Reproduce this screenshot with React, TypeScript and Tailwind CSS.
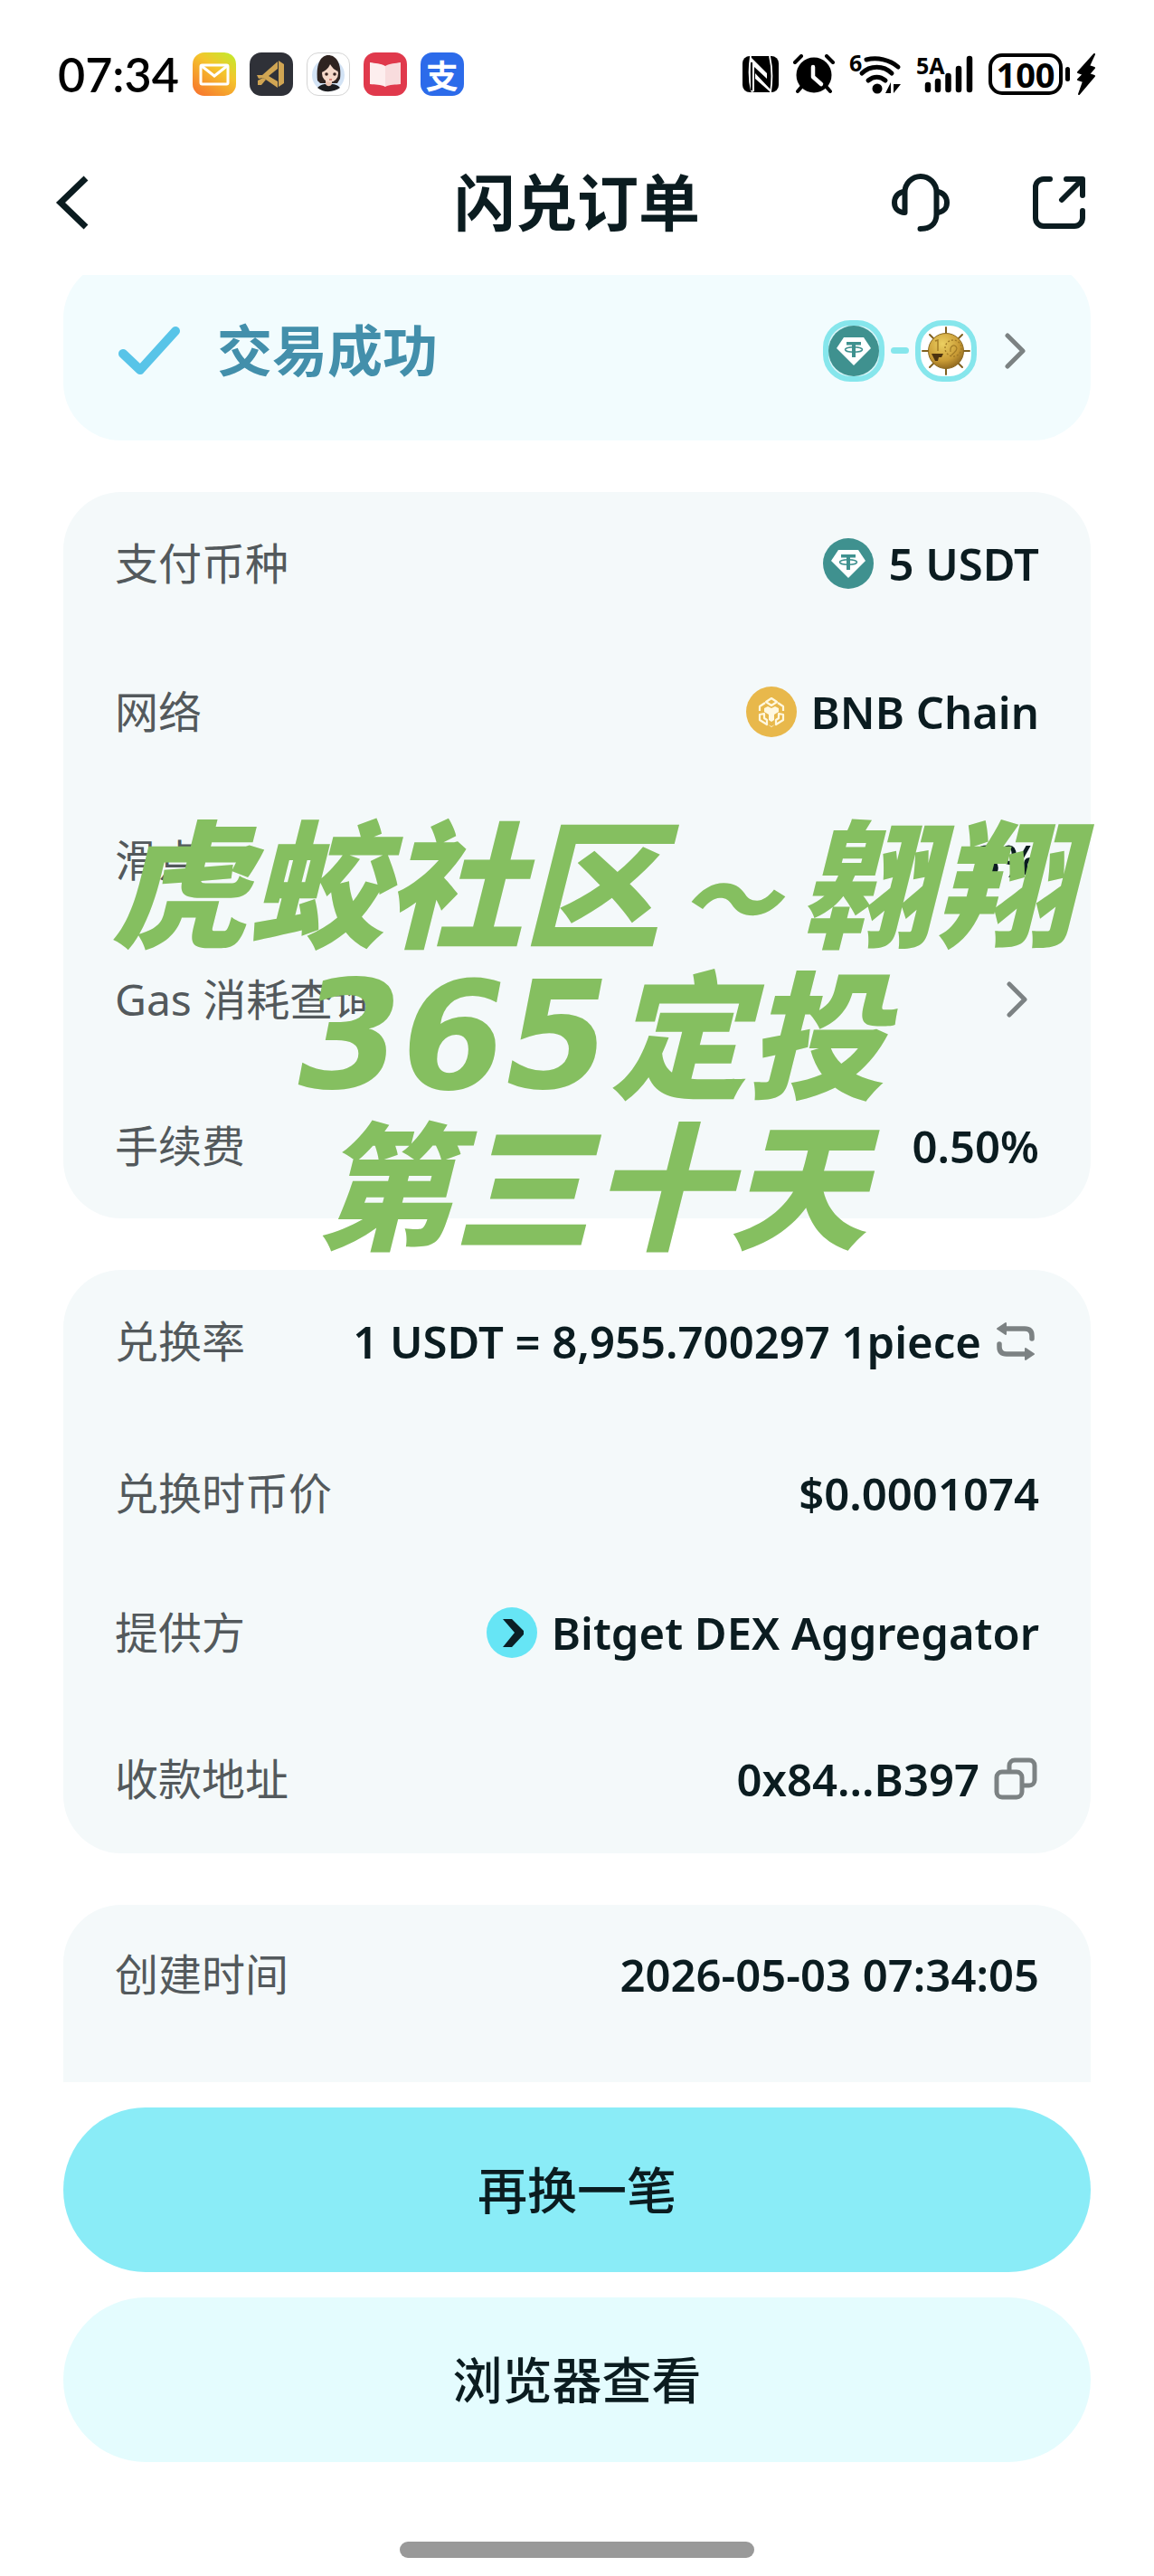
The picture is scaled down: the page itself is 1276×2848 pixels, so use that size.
import React from "react";

const SANS = "font-['Noto_Sans','Noto_Sans_CJK_SC',sans-serif]";

function MailApp() {
  return (
    <svg viewBox="0 0 48 48" className="size-12" aria-hidden="true">
      <defs>
        <linearGradient id="mail" x1="0.9" y1="0" x2="0.2" y2="1">
          <stop offset="0" stopColor="#c3ea2c" />
          <stop offset="0.4" stopColor="#f4c52c" />
          <stop offset="1" stopColor="#f77a2e" />
        </linearGradient>
      </defs>
      <rect width="48" height="48" rx="13" fill="url(#mail)" />
      <rect x="9" y="14" width="30" height="21" rx="1.5" fill="none" stroke="#fff" strokeWidth="3" />
      <path d="M10 15l14 11 14-11" fill="none" stroke="#fff" strokeWidth="3" />
    </svg>
  );
}

function CodeApp() {
  return (
    <svg viewBox="0 0 48 48" className="size-12" aria-hidden="true">
      <rect width="48" height="48" rx="13" fill="#2f3138" />
      <path d="M31 10v8l-10 8 10 6v7L15 28l-5 1-2-4 6 0z" fill="#d0a553" />
      <path d="M32 9l6 4v21l-6 4z" fill="#d0a553" />
      <path d="M9 31l6-3 3 2-5 6h-4z" fill="#d0a553" />
    </svg>
  );
}

function AvatarApp() {
  return (
    <svg viewBox="0 0 48 48" className="size-12" aria-hidden="true">
      <rect x="0.5" y="0.5" width="47" height="47" rx="12.5" fill="#fff" stroke="#d4d4d4" />
      <circle cx="24" cy="25" r="18" fill="#d3e3f5" />
      <path d="M12 31C10 12 16 3 24 3s15 8 13 26l-3 5H15z" fill="#2f2320" />
      <path d="M21 29h7v9h-7z" fill="#edc4b2" />
      <ellipse cx="26" cy="23" rx="9" ry="10" fill="#f6d8c9" />
      <path d="M16 22c2-10 8-12 11-13 3 2 7 5 8 12-5-2-7-5-9-8-2 5-6 8-10 9z" fill="#2f2320" />
      <circle cx="22" cy="24" r="1.8" fill="#3a2420" />
      <circle cx="31" cy="24" r="1.8" fill="#3a2420" />
      <path d="M25 30h3" stroke="#c76158" strokeWidth="1.4" />
      <path d="M12 39c4-4 8-4 9-4 2 3 5 3 7 0 4 0 6 1 9 4-7 5-18 6-25 0z" fill="#1d1d20" />
    </svg>
  );
}

function BookApp() {
  return (
    <svg viewBox="0 0 48 48" className="size-12" aria-hidden="true">
      <rect width="48" height="48" rx="13" fill="#e0394c" />
      <path d="M7 11c6 1 12 1 17 4v23c-5-3-11-2-17-3z" fill="#fdeeee" />
      <path d="M41 11c-6 1-12 1-17 4v23c5-3 11-2 17-3z" fill="#f8dcdd" />
    </svg>
  );
}

function PayApp() {
  return (
    <span className="flex size-12 items-center justify-center rounded-[13px] bg-[#2c6bea] font-['Noto_Sans_CJK_SC',sans-serif] text-[36px] leading-[48px] font-bold text-white">
      支
    </span>
  );
}

function NfcIcon() {
  return (
    <svg viewBox="0 0 40 40" className="size-10" aria-hidden="true">
      <rect width="40" height="40" rx="8" fill="#000" />
      <path d="M9 0c-2 13-2 27 1 39M31 40c2-13 2-27-1-40" fill="none" stroke="#fff" strokeWidth="1.8" />
      <path d="M9 1l18 18v6L13 12v27l-3 1C8 27 8 14 9 1zM14 19l17 18v3L14 25z" fill="#fff" />
      <path d="M10 7v31" stroke="#000" strokeWidth="2" />
    </svg>
  );
}

function AlarmIcon() {
  return (
    <svg viewBox="0 0 46 44" className="h-11 w-[46px]" aria-hidden="true">
      <circle cx="23" cy="23" r="19.5" fill="#000" />
      <path d="M2 9l7-7M44 9l-7-7M11 34l-6 7M35 34l6 7" stroke="#000" strokeWidth="4" strokeLinecap="round" />
      <path d="M22 14v11l9 8" fill="none" stroke="#fff" strokeWidth="4.5" strokeLinecap="round" strokeLinejoin="round" />
    </svg>
  );
}

function WifiIcon() {
  return (
    <svg viewBox="0 0 58 60" className="h-15 w-[58px]" aria-hidden="true">
      <text x="0" y="27" fontFamily="Noto Sans" fontWeight="700" fontSize="25">
        6
      </text>
      <g fill="none" stroke="#000" strokeWidth="5" strokeLinecap="round">
        <path d="M19 14c12-3 26 0 35 8" />
        <path d="M14 29c9-9 24-9 33 0" />
        <path d="M21 37c6-5 13-5 19 0" />
      </g>
      <circle cx="31" cy="46" r="5.5" />
      <path d="M46 39v12h-6zM49 51V41h8z" />
    </svg>
  );
}

function SignalIcon() {
  return (
    <svg viewBox="0 0 64 60" className="h-15 w-16" aria-hidden="true">
      <text x="0" y="30" fontFamily="Noto Sans" fontWeight="700" fontSize="25">
        5A
      </text>
      <g stroke="#000" strokeWidth="6.5" strokeLinecap="round">
        <path d="M13 42v5M24 38v9M35.5 32v15M47 24v23M59 13v34" />
      </g>
    </svg>
  );
}

function BatteryIcon() {
  return (
    <span className="flex items-center gap-[3px]">
      <span className="flex h-[46px] w-[82px] items-center justify-center rounded-[15px] border-4 border-black text-[38px] leading-[38px] font-bold">
        100
      </span>
      <span className="h-4 w-[5px] rounded-full bg-black" />
      <svg viewBox="0 0 22 48" className="ml-1 h-12 w-[22px]" aria-hidden="true">
        <path d="M20 2L2 22l6 2-6 6 6 2-5 14 17-20-6-2 6-7-6-2z" stroke="#000" strokeWidth="2" strokeLinejoin="round" />
      </svg>
    </span>
  );
}

function Tether({ className }: { className: string }) {
  return (
    <svg viewBox="0 0 56 56" className={className} aria-hidden="true">
      <circle cx="28" cy="28" r="28" fill="#3f918f" />
      <path d="M17 13h22l8 12-19 19L9 25z" fill="#fff" />
      <path d="M20 18h16v3.500H20zM26 20h4v15h-4z" fill="#3f918f" />
      <ellipse cx="28" cy="26.500" rx="9.500" ry="2.800" fill="none" stroke="#3f918f" strokeWidth="1.500" />
    </svg>
  );
}

function BnbCoin() {
  return (
    <svg viewBox="0 0 56 56" className="size-14" aria-hidden="true">
      <circle cx="28" cy="28" r="28" fill="#e8b84b" />
      <g fill="none" stroke="#fff8e0" strokeWidth="2.200" strokeLinejoin="round">
        <path d="M28 13l6 4-6 4-6-4zM21 18l-6 4v5M35 18l6 4v5" />
        <path d="M15 31v6l8 5v-5l-3-2v-5zM41 31v6l-8 5v-5l3-2v-5z" />
      </g>
      <path d="M20 24l4-2 4 2 4-2 4 2v4l-5 3v6l-3 2-3-2v-6l-5-3zM24 42l4 2 4-2-4 3z" fill="#fff8e0" />
    </svg>
  );
}

function GoldCoin() {
  return (
    <svg viewBox="0 0 56 56" className="size-14" aria-hidden="true">
      <defs>
        <radialGradient id="gold" cx="0.4" cy="0.3" r="0.8">
          <stop offset="0" stopColor="#ecd062" />
          <stop offset="0.6" stopColor="#c99b35" />
          <stop offset="1" stopColor="#7c5718" />
        </radialGradient>
      </defs>
      <path
        d="M28 2v52M2 28h52M10 10l36 36M46 10L10 46"
        stroke="#80611f"
        strokeWidth="2"
        strokeLinecap="round"
      />
      <circle cx="28" cy="28" r="19.5" fill="url(#gold)" stroke="#8c6a22" />
      <path d="M16 17l3-1v12" fill="none" stroke="#a27b26" strokeWidth="1.4" />
      <circle cx="36" cy="25" r="9" fill="none" stroke="#a27b26" strokeWidth="1.4" strokeDasharray="2 2" />
      <path d="M33 29c-1-8 6-9 7-4 0 4-4 5-6 8" fill="none" stroke="#a27b26" strokeWidth="1.2" />
      <path d="M12 31h13l-2 4h-3l-1 4h-3z" fill="#4d3310" />
    </svg>
  );
}

function BitgetCoin() {
  return (
    <svg viewBox="0 0 56 56" className="size-14" aria-hidden="true">
      <circle cx="28" cy="28" r="28" fill="#66e5f5" />
      <path d="M18 13h10l13 13v4L28 44H18l13-16z" fill="#0b1f26" />
    </svg>
  );
}

function Chevron() {
  return (
    <svg viewBox="0 0 24 40" className="h-10 w-6 text-[#7c8283]" fill="none" stroke="currentColor" aria-hidden="true">
      <path d="M3 3l17 17L3 37" strokeWidth="5" strokeLinecap="round" strokeLinejoin="round" />
    </svg>
  );
}

function SwapIcon() {
  return (
    <svg viewBox="0 0 48 44" className="h-11 w-12 text-[#7c8283]" fill="none" stroke="currentColor" aria-hidden="true">
      <path d="M8 8h24q8 0 8 8v3M4 25v3q0 8 8 8h24" strokeWidth="5.5" strokeLinecap="round" />
      <path d="M11 2L2 8l9 6zM33 30l9 6-9 6z" fill="currentColor" strokeWidth="2" strokeLinejoin="round" />
    </svg>
  );
}

function CopyIcon() {
  return (
    <svg viewBox="0 0 50 48" className="h-12 w-[50px] text-[#7c8283]" fill="none" stroke="currentColor" aria-hidden="true">
      <rect x="3" y="16" width="28" height="28" rx="6" strokeWidth="5" />
      <path d="M17 15V9a6 6 0 0 1 6-6h16a6 6 0 0 1 6 6v16a6 6 0 0 1-6 6h-7" strokeWidth="5" />
    </svg>
  );
}

function Row({ label, className = "", children }: { label: string; className?: string; children?: React.ReactNode }) {
  return (
    <div className={`flex h-20 items-center justify-between ${className}`}>
      <dt className="text-[48px] leading-[80px] text-[#53595c]">{label}</dt>
      <dd className="flex items-center gap-4 text-[49px] leading-[80px] font-semibold text-[#0b1c20]">{children}</dd>
    </div>
  );
}

export default function App() {
  return (
    <div className={`flex min-h-screen flex-col bg-white text-[#0b1c20] ${SANS}`}>
      <div className="flex h-[164px] items-center justify-between px-16 text-black">
        <div className="flex items-center gap-[15px]">
          <time className="font-['Lato',sans-serif] text-[52px] leading-[64px] font-semibold">07:34</time>
          <MailApp />
          <CodeApp />
          <AvatarApp />
          <BookApp />
          <PayApp />
        </div>
        <div className="flex items-center gap-4">
          <NfcIcon />
          <AlarmIcon />
          <WifiIcon />
          <SignalIcon />
          <BatteryIcon />
        </div>
      </div>

      <header className="grid h-[120px] grid-cols-[1fr_auto_1fr] items-center pr-[76px] pl-[60px]">
        <button type="button" aria-label="返回" className="justify-self-start">
          <svg viewBox="0 0 40 64" className="h-16 w-10" fill="none" stroke="currentColor" aria-hidden="true">
            <path d="M35 5L7 32l28 27" strokeWidth="7" />
          </svg>
        </button>
        <h1 className="pl-4 text-[68px] leading-[80px] font-bold">闪兑订单</h1>
        <div className="flex items-center gap-[92px] justify-self-end">
          <button type="button" aria-label="客服">
            <svg viewBox="0 0 64 64" className="size-16" fill="none" stroke="currentColor" strokeWidth="6" aria-hidden="true">
              <path d="M14.500 43V20.500a17.500 17.500 0 0 1 35 0V45c0 11-8 16-18 16" strokeLinecap="round" strokeLinejoin="round" />
              <path d="M14.500 20C7 20 3 26 3 32s4 11 11.500 11M49.500 20C57 20 61 26 61 32s-4 11-11.500 11" />
            </svg>
          </button>
          <button type="button" aria-label="分享">
            <svg viewBox="0 0 58 58" className="size-[58px]" fill="none" stroke="currentColor" strokeWidth="6" strokeLinecap="round" strokeLinejoin="round" aria-hidden="true">
              <path d="M19 3h-7a9 9 0 0 0-9 9v34a9 9 0 0 0 9 9h34a9 9 0 0 0 9-9v-8" />
              <path d="M37 3h18v18M54 4L32 26" />
            </svg>
          </button>
        </div>
      </header>

      <main className="flex flex-col gap-[57px] px-[70px] pt-5">
        <div className="overflow-hidden">
          <a href="#order" className="-mt-4 flex h-[199px] items-center justify-between rounded-[64px] bg-[#f2fcfe] pr-[71px] pl-[60px]">
            <span className="flex items-center gap-10">
              <svg viewBox="0 0 70 56" className="h-14 w-[70px]" fill="none" aria-hidden="true">
                <path d="M6 31l19 18L64 6" stroke="#58c4e8" strokeWidth="10" strokeLinecap="round" strokeLinejoin="round" />
              </svg>
              <span className="text-[61px] leading-[80px] font-bold text-[#438fab]">交易成功</span>
            </span>
            <span className="flex items-center gap-[7px]">
              <span className="flex size-[68px] items-center justify-center rounded-[30px] border-[6px] border-[#86e6ec] bg-[#d8f5f8]">
                <Tether className="size-14" />
              </span>
              <span className="h-[7px] w-5 rounded-full bg-[#86e6ec]" />
              <span className="flex size-[68px] items-center justify-center rounded-[30px] border-[6px] border-[#86e6ec] bg-white">
                <GoldCoin />
              </span>
              <span className="ml-6">
                <Chevron />
              </span>
            </span>
          </a>
        </div>

        <section className="relative rounded-[64px] bg-[#f4f9fa] px-[57px] pt-[39px] pb-10">
          <dl>
            <Row label="支付币种">
              <Tether className="size-14" />
              5 USDT
            </Row>
            <Row label="网络" className="mt-[84px]">
              <BnbCoin />
              BNB Chain
            </Row>
            <Row label="滑点" className="mt-[84px]">
              3%
            </Row>
            <Row label="Gas 消耗查询" className="mt-[74px]">
              <button type="button" aria-label="Gas 消耗查询" className="mr-3">
                <Chevron />
              </button>
            </Row>
            <Row label="手续费" className="mt-[82px]">
              0.50%
            </Row>
          </dl>
          <p className="pointer-events-none absolute -right-8 bottom-[-41px] left-0 text-center font-['Noto_Sans_CJK_SC',sans-serif] text-[152px] leading-[167px] font-black whitespace-nowrap text-[#85bf60] italic">
            虎蛟社区
            <span className="inline-block w-[152px] text-center text-[110px] leading-[110px]">～</span>
            翱翔
            <br />
            <span className="font-['DejaVu_Sans',sans-serif] text-[165px] leading-[100px]">365</span>定投
            <br />
            第三十天
          </p>
        </section>

        <section className="rounded-[64px] bg-[#f4f9fa] px-[57px] pt-[39px] pb-[42px]">
          <dl>
            <Row label="兑换率">
              1 USDT = 8,955.700297 1piece
              <button type="button" aria-label="切换汇率">
                <SwapIcon />
              </button>
            </Row>
            <Row label="兑换时币价" className="mt-[88px]">
              $0.0001074
            </Row>
            <Row label="提供方" className="mt-[74px]">
              <BitgetCoin />
              Bitget DEX Aggregator
            </Row>
            <Row label="收款地址" className="mt-[82px]">
              0x84...B397
              <button type="button" aria-label="复制地址">
                <CopyIcon />
              </button>
            </Row>
          </dl>
        </section>

        <section className="rounded-t-[64px] bg-[#f4f9fa] px-[57px] pt-[37px] pb-[79px]">
          <dl>
            <Row label="创建时间">2026-05-03 07:34:05</Row>
          </dl>
        </section>
      </main>

      <footer className="flex flex-col items-center px-[70px] pt-7 pb-5">
        <button type="button" className="h-[182px] w-full rounded-full bg-[#8aecf7] text-[55px] leading-[80px] font-medium">
          再换一笔
        </button>
        <button type="button" className="mt-7 h-[182px] w-full rounded-full bg-[#e4fcfe] text-[55px] leading-[80px] font-medium">
          浏览器查看
        </button>
        <div className="mt-[88px] h-[18px] w-[392px] rounded-full bg-[#999999]" />
      </footer>
    </div>
  );
}
